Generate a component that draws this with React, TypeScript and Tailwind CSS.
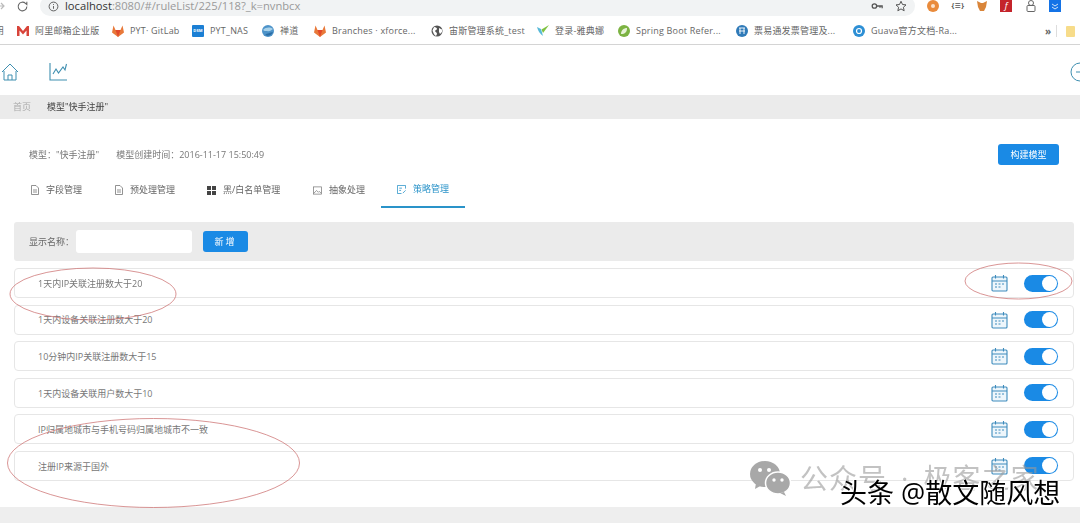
import React from "react";

const font = { fontFamily: '"Open Sans","Noto Sans CJK SC",sans-serif' };

function Fav({ kind }: { kind: string }) {
  const c = "w-[14px] h-[14px] shrink-0";
  switch (kind) {
    case "m":
      return (
        <svg className={c} viewBox="0 0 14 14">
          <path d="M1 12V2h2l4 5 4-5h2v10h-2.500V6.500L7 10.500 3.500 6.500V12z" fill="#d8443a" />
        </svg>
      );
    case "fox":
      return (
        <svg className={c} viewBox="0 0 14 14">
          <path d="M7 13 1 8.500l1.500-7L4.500 6h5l2-4.500L13 8.500z" fill="#e8793a" />
          <path d="M7 13 4.500 6h5z" fill="#e2492b" />
        </svg>
      );
    case "nas":
      return (
        <div className="w-3 h-3 ml-[1px] mr-[1px] shrink-0 rounded-[1px] bg-[#1b7fd4] flex items-center justify-center text-white text-[4px] font-bold">
          DSM
        </div>
      );
    case "zen":
      return (
        <svg className={c} viewBox="0 0 14 14">
          <circle cx="7" cy="7" r="6" fill="#4d93c9" />
          <path d="M2 6c3-3 7-3 10-1-2 1-3 3-6 2-2 0-3 0-4-1z" fill="#a9d2ea" />
          <path d="M4 11c2-2 5-2 8-3-1 3-5 5-8 3z" fill="#2b6ea6" />
        </svg>
      );
    case "globe":
      return (
        <svg className={c} viewBox="0 0 14 14">
          <circle cx="7" cy="7" r="5.500" fill="#555" />
          <path d="M4 3c2 0 3 1 3 2S5 6 5 7s2 1 2 3l-1 2C4 11 3 8 2.500 6.500zM9 4l3 1.500L12 8l-2 2-1-2z" fill="#fff" />
        </svg>
      );
    case "apollo":
      return (
        <svg className={c} viewBox="0 0 14 14">
          <path d="M1 3l4 2 2 7C4 10 2 7 1 3z" fill="#57b9d8" />
          <path d="M13 1 7 9 5.500 5.500z" fill="#7fc241" />
        </svg>
      );
    case "spring":
      return (
        <svg className={c} viewBox="0 0 14 14">
          <circle cx="7" cy="7" r="6" fill="#7cb342" />
          <path d="M4 10c0-4 3-6 6-6 0 4-2 6-6 6z" fill="#e8f3d8" />
        </svg>
      );
    case "piao":
      return (
        <svg className={c} viewBox="0 0 14 14">
          <circle cx="7" cy="7" r="6" fill="#2f7ab8" />
          <path d="M4 4h6M4 7h6M5 4v6M9 4v6" stroke="#fff" strokeWidth="0.900" fill="none" />
        </svg>
      );
    default:
      return (
        <svg className={c} viewBox="0 0 14 14">
          <circle cx="7" cy="7" r="6" fill="#2d8fd5" />
          <circle cx="7" cy="7" r="2.500" fill="none" stroke="#fff" strokeWidth="1.200" />
        </svg>
      );
  }
}

const bookmarks = [
  { k: "m", t: "阿里邮箱企业版", w: "w-[95px]" },
  { k: "fox", t: "PYT· GitLab", w: "w-[80px]" },
  { k: "nas", t: "PYT_NAS", w: "w-[70px]" },
  { k: "zen", t: "禅道", w: "w-[52px]" },
  { k: "fox", t: "Branches · xforce...", w: "w-[117px]" },
  { k: "globe", t: "宙斯管理系统_test", w: "w-[106px]" },
  { k: "apollo", t: "登录-雅典娜", w: "w-[81px]" },
  { k: "spring", t: "Spring Boot Refer...", w: "w-[118px]" },
  { k: "piao", t: "票易通发票管理及...", w: "w-[117px]" },
  { k: "guava", t: "Guava官方文档-Ra...", w: "w-[130px]" },
];

function BrowserBars() {
  return (
    <>
      <div className="h-4 box-border pb-1 flex items-center bg-white overflow-hidden">
        <svg className="w-3 h-3 ml-[-6px] shrink-0" viewBox="0 0 12 12">
          <path d="M2 6h8M7 3l3 3-3 3" stroke="#bbb" strokeWidth="1.200" fill="none" />
        </svg>
        <svg className="w-[13px] h-[13px] ml-[10px] shrink-0" viewBox="0 0 24 24">
          <path d="M20 12a8 8 0 1 1-2.500-5.800L20 8.500V3" stroke="#666" strokeWidth="2" fill="none" />
        </svg>
        <div className="ml-[11px] w-[875px] h-5 rounded-full bg-[#f1f3f4] flex items-center pl-[8px] shrink-0">
          <svg className="w-[11px] h-[11px] shrink-0" viewBox="0 0 12 12">
            <circle cx="6" cy="6" r="4.800" stroke="#555" strokeWidth="1" fill="none" />
            <path d="M6 5.500v3M6 3.400v1" stroke="#555" strokeWidth="1" />
          </svg>
          <span className="ml-[6px] text-[11.200px] leading-[14px] text-[#9a9a9a] whitespace-nowrap">
            <span className="text-[#333]">localhost</span>:8080/#/ruleList/225/118?_k=nvnbcx
          </span>
          <div className="ml-auto mr-[8px] flex items-center gap-[12px]">
            <svg className="w-[12px] h-[12px]" viewBox="0 0 14 14">
              <circle cx="4" cy="7" r="2.600" stroke="#555" strokeWidth="1.500" fill="none" />
              <path d="M6.500 7H13v2.500M10.500 7v2" stroke="#555" strokeWidth="1.500" fill="none" />
            </svg>
            <svg className="w-[12px] h-[12px]" viewBox="0 0 24 24">
              <path d="M12 2.500l3 6.500 7 .8-5.200 4.700 1.500 7L12 17.800 5.700 21.500l1.500-7L2 9.800 9 9z" stroke="#555" strokeWidth="2" fill="none" />
            </svg>
          </div>
        </div>
        <div className="ml-[12px] flex items-center gap-[12.400px]">
          <div className="w-3 h-3 rounded-full bg-[#e98b3c] flex items-center justify-center">
            <div className="w-1 h-1 rounded-full bg-[#fbe3cd]" />
          </div>
          <span className="w-3 text-[7px] leading-[10px] font-bold text-[#555] text-center whitespace-nowrap">{"{≡}"}</span>
          <svg className="w-3 h-3" viewBox="0 0 12 12">
            <path d="M1 1l4 2h2l4-2-1 6-2 4H4L2 7z" fill="#d9853a" />
          </svg>
          <div className="w-3 h-3 bg-[#c4242b] text-white text-[9px] leading-3 text-center italic">f</div>
          <svg className="w-3 h-3" viewBox="0 0 12 12">
            <circle cx="6" cy="3" r="2.500" stroke="#666" strokeWidth="1" fill="none" />
            <rect x="2" y="5.500" width="8" height="6" rx="1" stroke="#666" strokeWidth="1" fill="none" />
          </svg>
          <div className="w-3 h-3 bg-[#1473e6] flex items-center justify-center">
            <svg className="w-2 h-2" viewBox="0 0 8 8">
              <path d="M1 2l3 2 3-2M1 5l3 2 3-2" stroke="#fff" strokeWidth="0.800" fill="none" />
            </svg>
          </div>
        </div>
      </div>
      <div className="h-[29px] box-border pt-[2px] flex items-center bg-white border-b border-[#d4d4d4] overflow-hidden text-[9px] text-[#666] tracking-[0.2px]">
        <div className="w-4 shrink-0 overflow-hidden">
          <span className="block w-[9px] ml-[-5px]">用</span>
        </div>
        {bookmarks.map((b) => (
          <div key={b.t} className={`${b.w} shrink-0 flex items-center gap-[5px] whitespace-nowrap`}>
            <Fav kind={b.k} />
            <span>{b.t}</span>
          </div>
        ))}
        <span className="ml-[63px] text-[10px] font-bold text-[#666] shrink-0">»</span>
        <div className="ml-[5px] w-px h-3 bg-[#ddd] shrink-0" />
        <div className="ml-[9px] w-[9px] h-[11px] rounded-[1px] bg-[#f7dc8a] shrink-0" />
      </div>
    </>
  );
}

function Calendar() {
  return (
    <svg className="w-[17px] h-[18px] shrink-0" viewBox="0 0 17 18" fill="none" stroke="#3f8cbd" strokeWidth="1.100">
      <rect x="1" y="3" width="15" height="14" rx="1" fill="#eef6fb" />
      <path d="M1 7h15M4.500 1v3.500M12.500 1v3.500" />
      <path d="M4 10h2M7.500 10h2M11 10h2M4 13h2M7.500 13h2" strokeWidth="1.100" />
    </svg>
  );
}

function Toggle() {
  return (
    <div className="w-[34px] h-[17px] rounded-full bg-[#1a8ae5] flex items-center justify-end pr-[1px] shrink-0">
      <div className="w-[15px] h-[15px] rounded-full bg-white" />
    </div>
  );
}

const rows = [
  "1天内IP关联注册数大于20",
  "1天内设备关联注册数大于20",
  "10分钟内IP关联注册数大于15",
  "1天内设备关联用户数大于10",
  "IP归属地城市与手机号码归属地城市不一致",
  "注册IP来源于国外",
];

function TabIcon({ i, active }: { i: number; active?: boolean }) {
  const s = active ? "#2a93c9" : "#777";
  if (i === 2)
    return (
      <div className="grid grid-cols-2 gap-[1px] w-[9px] h-[9px] shrink-0">
        {[0, 1, 2, 3].map((n) => (
          <div key={n} className="bg-[#444]" />
        ))}
      </div>
    );
  if (i === 3)
    return (
      <svg className="w-[9px] h-[9px] shrink-0" viewBox="0 0 10 10" fill="none" stroke={s} strokeWidth="0.800">
        <rect x="0.500" y="1" width="9" height="8" />
        <path d="M1 8l3-3 2 2 1-1 2 2" />
      </svg>
    );
  if (i === 4)
    return (
      <svg className="w-[9px] h-[9px] shrink-0" viewBox="0 0 10 10" fill="none" stroke={s} strokeWidth="0.900">
        <path d="M9.500 4V.500H.500v9H5" />
        <path d="M2.500 3.500h3M2.500 6h2M6.500 9l3-3" />
      </svg>
    );
  return (
    <svg className="w-[8px] h-[10px] shrink-0" viewBox="0 0 8 10" fill="none" stroke={s} strokeWidth="0.800">
      <path d="M.500.500h4.500l2.500 2.500v6.500h-7z" />
      <path d="M2 5h4M2 7h4" />
    </svg>
  );
}

const tabs = [
  { t: "字段管理", w: "w-[84px]" },
  { t: "预处理管理", w: "w-[92px]" },
  { t: "黑/白名单管理", w: "w-[106px]" },
  { t: "抽象处理", w: "w-[68px]" },
];

export default function App() {
  return (
    <div className="relative w-[1080px] h-[523px] overflow-hidden bg-white" style={font}>
      <div className="h-full flex flex-col blur-[0.3px]">
        <BrowserBars />
        {/* nav */}
        <div className="h-[50px] box-border pt-[3px] flex items-center justify-between shrink-0 overflow-hidden">
          <div className="flex items-center gap-[30px]">
            <svg className="w-[18px] h-[18px] ml-px" viewBox="0 0 18 18" fill="none" stroke="#3f8fb0" strokeWidth="1">
              <path d="M1 9l8-8 8 8" />
              <path d="M3 8v9h12V8M7 17v-5h4v5" />
            </svg>
            <svg className="w-[19px] h-[19px]" viewBox="0 0 19 19" fill="none" stroke="#3f8fb0" strokeWidth="1.100">
              <path d="M1 1v17h17" />
              <path d="M4 12l3-5 2.500 4L14 5l2 3 1.500-6" />
            </svg>
          </div>
          <svg className="w-5 h-5 mr-[-10px] shrink-0" viewBox="0 0 20 20" fill="none" stroke="#3f8fb0" strokeWidth="1">
            <circle cx="10" cy="10" r="9" />
            <path d="M6 10h8" />
          </svg>
        </div>
        {/* breadcrumb */}
        <div className="h-6 shrink-0 bg-[#ebebeb] flex items-center pl-[13px] text-[9px]">
          <span className="text-[#aaa]">首页</span>
          <span className="ml-4 text-[#444]">模型"快手注册"</span>
        </div>
        {/* content */}
        <div className="flex-1 pl-[14px] pr-[6px] min-h-0">
          <div className="h-[25px] mt-[23px] flex items-center justify-between text-[9px] text-[#777]">
            <div className="pl-[15px] flex gap-[17px]">
              <span>模型："快手注册"</span>
              <span>模型创建时间：2016-11-17 15:50:49</span>
            </div>
            <div className="w-[61px] h-[21px] mr-[15px] rounded-[3px] bg-[#1a8ae5] text-white flex items-center justify-center">
              构建模型
            </div>
          </div>
          <div className="mt-[5px] h-[36px] flex items-stretch pl-[17px] text-[9px] text-[#666]">
            {tabs.map((t, i) => (
              <div key={t.t} className={`${t.w} shrink-0 flex items-center gap-[7px]`}>
                <TabIcon i={i} />
                <span className="whitespace-nowrap">{t.t}</span>
              </div>
            ))}
            <div className="w-[84px] shrink-0 flex items-center justify-center gap-[7px] border-b-2 border-[#2a93c9] text-[#2a93c9]">
              <TabIcon i={4} active />
              <span>策略管理</span>
            </div>
          </div>
          <div className="mt-[14px] h-[39px] rounded-[3px] bg-[#ebebeb] flex items-center pl-[15px] text-[9px] text-[#666]">
            <span className="whitespace-nowrap w-[47px]">显示名称：</span>
            <div className="w-[116px] h-[23px] rounded-[3px] bg-white" />
            <div className="ml-[11px] w-[45px] h-[21px] rounded-[3px] bg-[#1a8ae5] text-white flex items-center justify-center tracking-[2px]">
              新增
            </div>
          </div>
          <div className="mt-[7px] flex flex-col gap-[6.600px]">
            {rows.map((r) => (
              <div
                key={r}
                className="h-[30px] rounded-[4px] border border-[#e6e6e6] bg-white flex items-center pl-[23px] pr-[15px] text-[9px] text-[#777]"
              >
                <span className="pt-[1px]">{r}</span>
                <div className="ml-auto mr-[16px]">
                  <Calendar />
                </div>
                <Toggle />
              </div>
            ))}
          </div>
        </div>
        <div className="h-4 shrink-0 bg-[#eeeeee]" />
      </div>

      {/* hand-drawn annotations over the screenshot */}
      <svg className="absolute inset-0 w-[1080px] h-[523px] pointer-events-none" viewBox="0 0 1080 523" fill="none" stroke="#cf7a7a" strokeWidth="0.800">
        <ellipse cx="93" cy="294" rx="83" ry="26" />
        <ellipse cx="1018.500" cy="281" rx="53.500" ry="18" />
        <ellipse cx="153.500" cy="463" rx="146" ry="44.500" />
      </svg>

      {/* watermarks */}
      <div className="absolute left-[749px] top-[460px] flex items-center gap-[9px] text-[28px] leading-[34px] tracking-[1px] text-[#9a9a9a]/60 whitespace-nowrap">
        <svg className="w-[42px] h-[36px] shrink-0" viewBox="0 0 42 36">
          <ellipse cx="16" cy="14" rx="15" ry="13" fill="#a8a8a8" />
          <path d="M7 23l-1 6 7-4z" fill="#a8a8a8" />
          <ellipse cx="29" cy="23" rx="12.500" ry="11" fill="#a8a8a8" stroke="#fff" strokeWidth="1.500" />
          <path d="M35 32l2 4-6-3z" fill="#a8a8a8" />
          <circle cx="11" cy="10" r="2" fill="#fff" />
          <circle cx="20" cy="10" r="2" fill="#fff" />
          <circle cx="25" cy="20" r="1.700" fill="#fff" />
          <circle cx="33" cy="20" r="1.700" fill="#fff" />
        </svg>
        <span>
          公众号<span className="mx-[14px]">·</span>极客之家
        </span>
      </div>
      <div className="absolute left-[840px] top-[476px] text-[27px] leading-[34px] text-black whitespace-nowrap [text-shadow:1px_1px_0_#fff,-1px_0_0_#fff]">
        头条 @散文随风想
      </div>
    </div>
  );
}
